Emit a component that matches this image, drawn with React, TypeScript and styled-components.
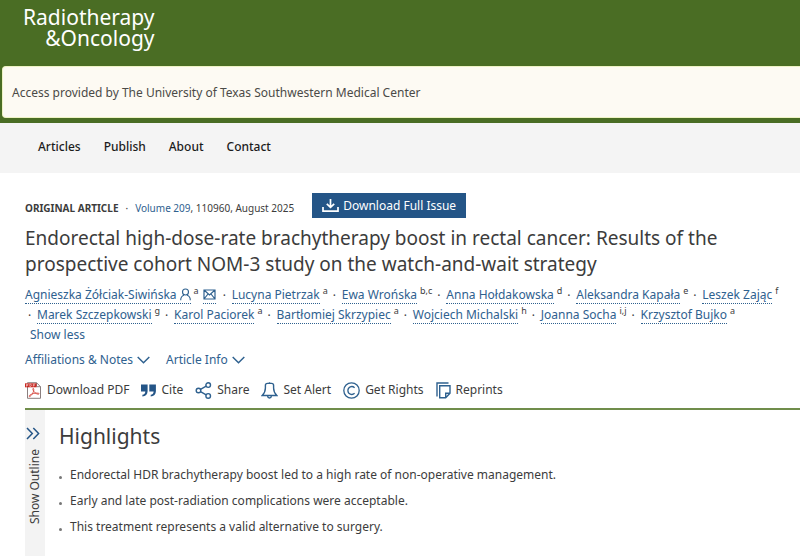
import React from 'react';
import styled, { createGlobalStyle } from 'styled-components';

const blue = '#2f618f';
const deepBlue = '#245587';
const green = '#4a6d24';
const ink = '#3c3c3c';

const GlobalStyle = createGlobalStyle`
  * { box-sizing: border-box; }
  body {
    margin: 0;
    background: #fff;
    color: ${ink};
    font: 12px/20px "Noto Sans", "Open Sans", sans-serif;
    overflow-x: hidden;
  }
  h1, h2, p, ul { margin: 0; padding: 0; font-weight: 400; }
  ul { list-style: none; }
  a { color: inherit; text-decoration: none; }
  button { border: 0; padding: 0; background: none; color: inherit; font: inherit; cursor: pointer; }
  svg { display: block; flex: none; }
`;

const Page = styled.div`
  display: flex;
  flex-direction: column;
  min-height: 100vh;
`;

const Masthead = styled.header`
  background: ${green};
  padding: 7px 0 5px 2px;
`;

const Logo = styled.a`
  display: block;
  width: max-content;
  padding-left: 21px;
  color: #fff;
  font-size: 21px;
  line-height: 21px;
  text-align: right;
`;

const AccessNotice = styled.p`
  margin-top: 17px;
  padding: 16px 9px 14px;
  background: #fdfaf3;
  border: 1px solid #eef3c4;
  border-right: 0;
  border-radius: 4px 0 0 4px;
  color: #4b4a47;
`;

const Nav = styled.nav`
  display: flex;
  gap: 23px;
  padding: 14px 38px 16px;
  background: #f4f4f4;
  color: #1c1c1c;
  font-weight: 500;
`;

const Article = styled.main`
  display: flex;
  flex: 1;
  flex-direction: column;
  padding: 20px 0 0 25px;
`;

const Meta = styled.div`
  display: flex;
  align-items: flex-start;
  font-size: 10px;
`;

const Citation = styled.p`
  padding-top: 5px;
`;

const Kind = styled.strong`
  font-weight: 700;
`;

const MetaDot = styled.span`
  margin: 0 7px;
`;

const IssueLink = styled.a`
  color: ${blue};
`;

const IssueButton = styled.button`
  display: flex;
  align-items: center;
  gap: 4px;
  height: 25px;
  margin-left: 18px;
  padding: 0 10px;
  background: ${deepBlue};
  color: #fff;
  font-size: 12px;
`;

const Title = styled.h1`
  margin-top: 7px;
  padding-right: 60px;
  font-size: 19px;
  line-height: 26px;
`;

const Authors = styled.ul`
  display: flex;
  flex-wrap: wrap;
  margin-top: 9px;
`;

const Author = styled.li`
  display: flex;
  white-space: nowrap;

  & + &::before {
    content: '·';
    width: 9px;
    padding-left: 3px;
  }
`;

const AuthorLink = styled.a`
  display: flex;
  align-items: center;
  gap: 3px;
  height: 18px;
  border-bottom: 1px dotted ${blue};
  color: ${blue};
`;

const CorrespondenceLink = styled(AuthorLink)`
  margin: 0 4px 0 2px;
`;

const Marks = styled.sup`
  margin: 0 2px 0 3px;
  font-size: 9px;
  line-height: 10px;
`;

const ShowLess = styled.button`
  align-self: flex-start;
  margin-left: 5px;
  line-height: 18px;
  color: ${blue};
`;

const Panels = styled.div`
  display: flex;
  gap: 16px;
  margin-top: 6px;
  color: ${blue};
`;

const PanelButton = styled.button`
  display: flex;
  align-items: center;
  gap: 4px;
`;

const Tools = styled.div`
  display: flex;
  gap: 12px;
  margin-top: 10px;
`;

const Tool = styled.button`
  display: flex;
  align-items: center;
  gap: 5px;
  white-space: nowrap;
`;

const Body = styled.div`
  display: flex;
  flex: 1;
  margin-top: 8px;
  border-top: 2px solid #708d4b;
`;

const Outline = styled.button`
  display: flex;
  flex-direction: column;
  align-items: flex-start;
  gap: 9px;
  width: 20px;
  padding: 17px 0 0 1px;
  background: #f3f3f3;
  color: ${deepBlue};
`;

const OutlineLabel = styled.span`
  color: ${ink};
  line-height: 18px;
  writing-mode: vertical-rl;
  rotate: 180deg;
`;

const Highlights = styled.section`
  padding: 12px 14px;
`;

const Heading = styled.h2`
  font-size: 21px;
  line-height: 28px;
`;

const Points = styled.ul`
  display: grid;
  gap: 6px;
  margin-top: 15px;
`;

const Point = styled.li`
  display: flex;
  align-items: center;
  gap: 8px;

  &::before {
    content: '';
    width: 3px;
    height: 3px;
    margin-top: 4px;
    border-radius: 50%;
    background: #777;
  }
`;

const Icon = styled.svg<{ $color?: string; $weight?: number }>`
  fill: none;
  stroke: currentColor;
  color: ${(p) => p.$color ?? 'inherit'};
  stroke-width: ${(p) => p.$weight ?? 1.4};
`;

const DownloadIcon = () => (
  <Icon width="17" height="15" viewBox="0 0 17 15" $weight={1.7} aria-hidden="true">
    <path d="M8.5 1v8M4.8 5.8l3.7 3.6 3.7-3.6M1 9v4.2h15V9" />
  </Icon>
);

const PersonIcon = () => (
  <Icon width="11" height="13" viewBox="0 0 11 13" $weight={1.1} aria-hidden="true">
    <circle cx="5.5" cy="4" r="3" />
    <path d="M.7 12.3C.7 9.2 2.4 7.8 4 7.3M7 7.3c1.6.5 3.3 1.9 3.3 5" />
  </Icon>
);

const MailIcon = () => (
  <Icon width="13" height="11" viewBox="0 0 13 11" $weight={1.2} aria-hidden="true">
    <path d="M1 1h11v9H1zM1 1l5.5 5L12 1M1 10l4-5M12 10L8 5" />
  </Icon>
);

const Chevron = () => (
  <Icon width="13" height="8" viewBox="0 0 13 8" $weight={1.5} aria-hidden="true">
    <path d="M.7 1l5.8 5.7L12.3 1" />
  </Icon>
);

const DoubleChevron = () => (
  <Icon width="14" height="13" viewBox="0 0 14 13" $weight={1.5} aria-hidden="true">
    <path d="M1 1l5.3 5.5L1 12M7.3 1l5.3 5.5L7.3 12" />
  </Icon>
);

const PdfIcon = () => (
  <Icon width="17" height="17" viewBox="0 0 17 17" $weight={1} aria-hidden="true">
    <path d="M2.5.7h9l4 4v11.6h-13z" fill="#fff" stroke="#8a7f7f" />
    <path d="M11.5.7v4h4" stroke="#8a7f7f" />
    <path d="M0 1.3h11.5v4H0z" fill="#c92b24" stroke="none" />
    <path d="M1.5 4.6V2.2h1.4v1.2H1.5M4.8 2.2v2.2h1l.6-.6v-.9l-.6-.7zM8.3 4.6V2.2h1.8M8.3 3.4h1.4" stroke="#fff" strokeWidth=".5" />
    <path d="M8.5 6.5c1.1 1.9-1.2 6.2-3.4 7.9-1 .6-1.5-.3-.5-1.1 2.3-1.8 6-2.6 8.7-2.1 1.3.3.9 1.2-.3 1C10.6 11.8 8.3 9.5 7.9 7.5c-.2-.9.2-1.4.6-1z" stroke="#d5463d" strokeWidth=".9" />
  </Icon>
);

const QuoteIcon = () => (
  <Icon width="15" height="13" viewBox="0 0 15 13" $color={deepBlue} aria-hidden="true">
    <path d="M0 .5h6.6v6.7c0 3.1-2 5-5.2 5.3v-1.7c1.9-.3 2.9-1.4 2.9-3.3H0zM8.3.5h6.6v6.7c0 3.1-2 5-5.2 5.3v-1.7c1.9-.3 2.9-1.4 2.9-3.3H8.3z" fill="currentColor" stroke="none" />
  </Icon>
);

const ShareIcon = () => (
  <Icon width="17" height="17" viewBox="0 0 17 17" $color={blue} aria-hidden="true">
    <circle cx="3.5" cy="8.5" r="2.3" />
    <circle cx="13.2" cy="3.1" r="2.3" />
    <circle cx="13.2" cy="13.9" r="2.3" />
    <path d="M5.500 7.3l5.700-3.200M5.500 9.700l5.700 3.200" />
  </Icon>
);

const BellIcon = () => (
  <Icon width="17" height="17" viewBox="0 0 17 17" $color={blue} $weight={1.4} aria-hidden="true">
    <path d="M8.5.2v1.2M1.2 13.5c2-1.9 3.2-4 3.2-7.5V3.500c0-1.200.9-2.100 2.100-2.100h4c1.200 0 2.100.9 2.100 2.100V6c0 3.500 1.200 5.600 3.200 7.500zM6.600 14c.2 2.600 3.600 2.600 3.800 0" />
  </Icon>
);

const RightsIcon = () => (
  <Icon width="17" height="17" viewBox="0 0 17 17" $color={blue} $weight={1.3} aria-hidden="true">
    <circle cx="8.5" cy="8.5" r="7.7" />
    <path d="M11.6 5.7c-2.6-2.4-6.7-.9-6.7 2.8s4.1 5.2 6.7 2.8" />
  </Icon>
);

const ReprintsIcon = () => (
  <Icon width="15" height="17" viewBox="0 0 15 17" $color={blue} $weight={1.4} aria-hidden="true">
    <path d="M1 14.5V1h11.5M3.7 3.7H14v7.6l-4.3 4.5h-6zM14 11.3H9.7v4.5" />
  </Icon>
);

const authors = [
  ['Agnieszka Żółciak-Siwińska', 'a'],
  ['Lucyna Pietrzak', 'a'],
  ['Ewa Wrońska', 'b,c'],
  ['Anna Hołdakowska', 'd'],
  ['Aleksandra Kapała', 'e'],
  ['Leszek Zając', 'f'],
  ['Marek Szczepkowski', 'g'],
  ['Karol Paciorek', 'a'],
  ['Bartłomiej Skrzypiec', 'a'],
  ['Wojciech Michalski', 'h'],
  ['Joanna Socha', 'i,j'],
  ['Krzysztof Bujko', 'a'],
];

const tools: [string, React.FC][] = [
  ['Download PDF', PdfIcon],
  ['Cite', QuoteIcon],
  ['Share', ShareIcon],
  ['Set Alert', BellIcon],
  ['Get Rights', RightsIcon],
  ['Reprints', ReprintsIcon],
];

const points = [
  'Endorectal HDR brachytherapy boost led to a high rate of non-operative management.',
  'Early and late post-radiation complications were acceptable.',
  'This treatment represents a valid alternative to surgery.',
];

export default function App() {
  return (
    <Page>
      <GlobalStyle />
      <Masthead>
        <Logo href="#">
          Radiotherapy
          <br />
          &amp;Oncology
        </Logo>
        <AccessNotice>
          Access provided by The University of Texas Southwestern Medical Center
        </AccessNotice>
      </Masthead>
      <Nav>
        {['Articles', 'Publish', 'About', 'Contact'].map((item) => (
          <a key={item} href="#">{item}</a>
        ))}
      </Nav>
      <Article>
        <Meta>
          <Citation>
            <Kind>ORIGINAL ARTICLE</Kind>
            <MetaDot>·</MetaDot>
            <IssueLink href="#">Volume 209</IssueLink>, 110960, August 2025
          </Citation>
          <IssueButton>
            <DownloadIcon />
            Download Full Issue
          </IssueButton>
        </Meta>
        <Title>
          Endorectal high-dose-rate brachytherapy boost in rectal cancer: Results of the
          prospective cohort NOM-3 study on the watch-and-wait strategy
        </Title>
        <Authors>
          {authors.map(([name, marks], i) => (
            <Author key={name}>
              <AuthorLink href="#">
                {name}
                {i === 0 && <PersonIcon />}
              </AuthorLink>
              <Marks>{marks}</Marks>
              {i === 0 && (
                <CorrespondenceLink href="#" aria-label="Email the author">
                  <MailIcon />
                </CorrespondenceLink>
              )}
            </Author>
          ))}
        </Authors>
        <ShowLess>Show less</ShowLess>
        <Panels>
          <PanelButton>Affiliations &amp; Notes <Chevron /></PanelButton>
          <PanelButton>Article Info <Chevron /></PanelButton>
        </Panels>
        <Tools>
          {tools.map(([label, Glyph]) => (
            <Tool key={label}>
              <Glyph />
              {label}
            </Tool>
          ))}
        </Tools>
        <Body>
          <Outline>
            <DoubleChevron />
            <OutlineLabel>Show Outline</OutlineLabel>
          </Outline>
          <Highlights>
            <Heading>Highlights</Heading>
            <Points>
              {points.map((text) => (
                <Point key={text}>{text}</Point>
              ))}
            </Points>
          </Highlights>
        </Body>
      </Article>
    </Page>
  );
}
